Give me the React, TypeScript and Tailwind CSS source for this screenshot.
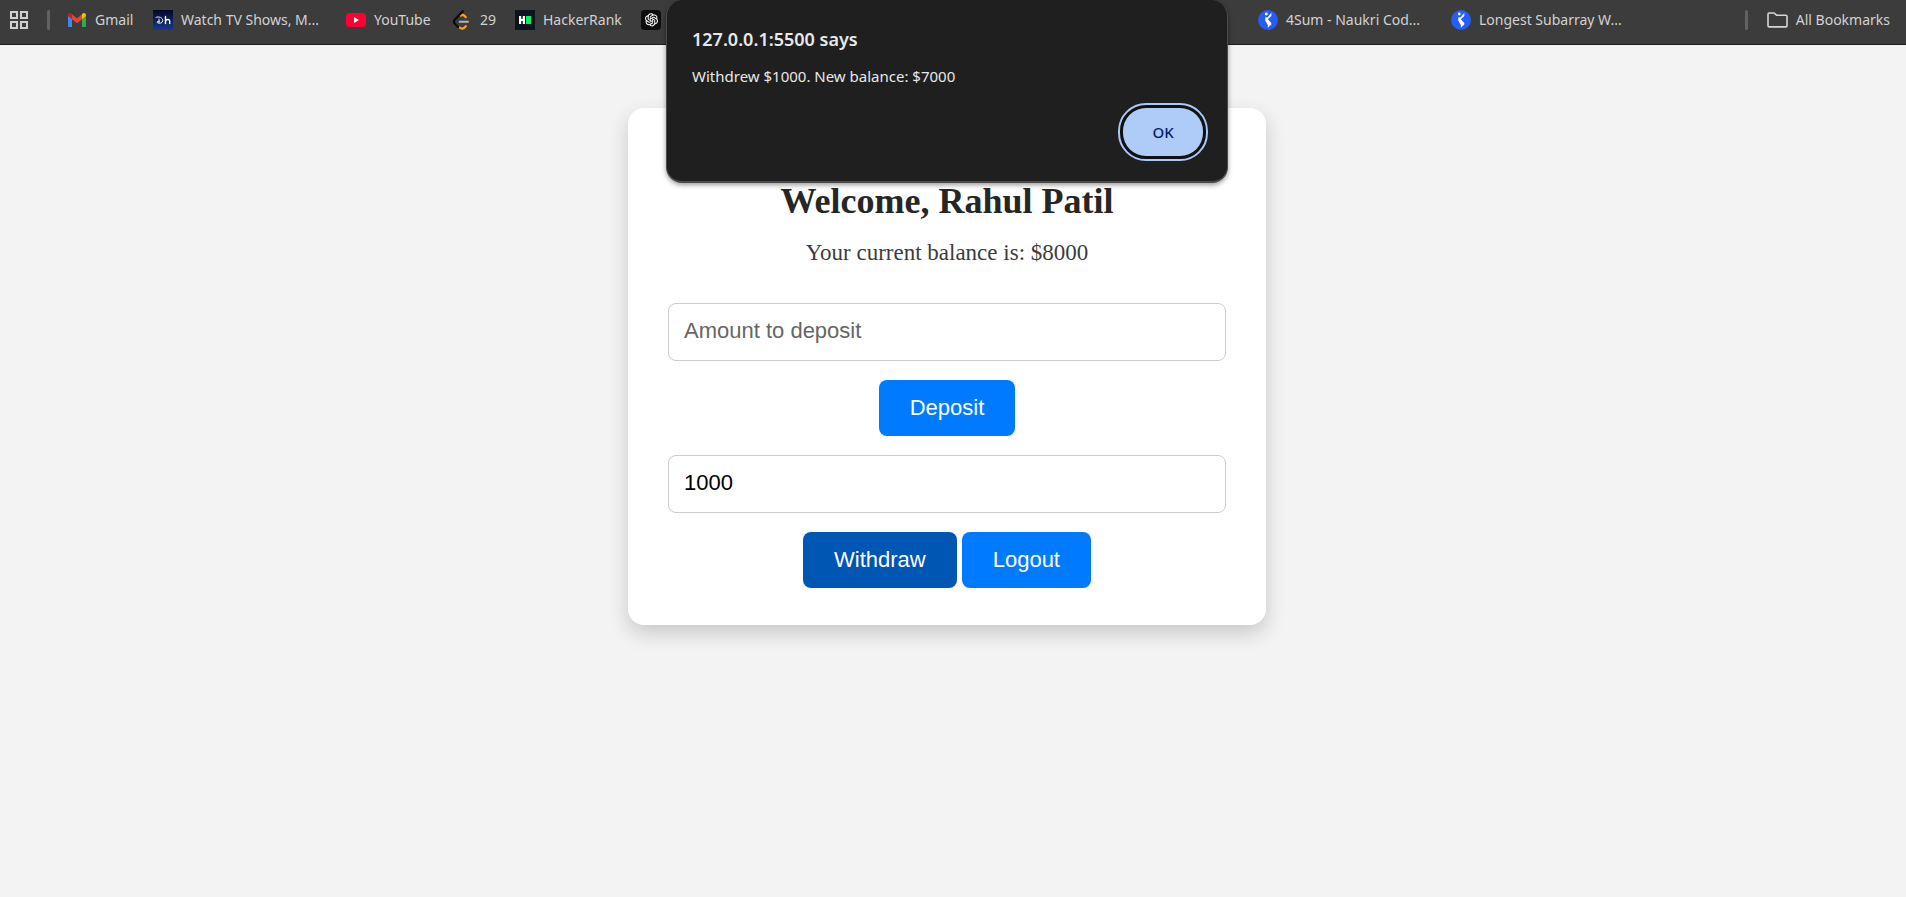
import { useState, type ReactNode } from "react";
import { AiOutlineOpenAI } from "react-icons/ai";

function GmailIcon() {
  return (
    <svg viewBox="0 0 18 14" className="mx-px h-[14px] w-[18px] shrink-0" aria-hidden="true">
      <path fill="#4285f4" d="M0 2.5v10.2C0 13.4.6 14 1.3 14H4V6z" />
      <path fill="#34a853" d="M18 2.5v10.2c0 .7-.6 1.3-1.3 1.3H14V6z" />
      <path fill="#ea4335" d="M4 1.3 9 5.4l5-4.1v4.9l-5 4.1-5-4.1z" />
      <path fill="#c5221f" d="M0 2.2C0 .5 2-.6 3.400.6L4 1.200V6.200L0 3z" />
      <path fill="#fbbc04" d="M18 2.200C18 .5 16-.6 14.600.6L14 1.200V6.200L18 3z" />
    </svg>
  );
}

function HotstarIcon() {
  return (
    <svg viewBox="0 0 20 20" className="size-5 shrink-0" aria-hidden="true">
      <defs>
        <linearGradient id="hotstar" x1="0" y1="0" x2="0" y2="1">
          <stop offset="0" stopColor="#030727" />
          <stop offset="1" stopColor="#153a8c" />
        </linearGradient>
      </defs>
      <path fill="url(#hotstar)" d="M0 0h20v20H0z" />
      <g fill="none" stroke="#fff" strokeLinecap="round">
        <path strokeWidth=".9" d="M3 7.300c3-1 6.700.2 6.700 3.300 0 2.400-2.700 3.200-4.900 2.300-1.600-.7-.7-1.900 1.800-1.700M6 9v3.500" />
        <path strokeWidth="1.400" d="M12.500 6.500v7M12.700 10.700c.8-1.700 4-1.700 4 .5v2.300" />
      </g>
    </svg>
  );
}

function YouTubeIcon() {
  return (
    <svg viewBox="0 0 20 14" className="h-[14px] w-5 shrink-0" aria-hidden="true">
      <rect width="20" height="14" rx="3.500" fill="#ff0033" />
      <path fill="#fff" d="m8 4 5 3-5 3z" />
    </svg>
  );
}

function LeetCodeIcon() {
  return (
    <svg viewBox="0 0 20 20" className="size-5 shrink-0" aria-hidden="true">
      <g fill="none" strokeLinecap="round" strokeWidth="2.200">
        <path stroke="#ffa116" d="M9 5.500c1.300-.9 2.500-.6 3.500.4l1.300 1.300M7.500 17.500c1.600 1.400 3.600 1.300 4.900.1l1.400-1.400" />
        <path stroke="#0b0b0b" d="M10.800 1.300 3.200 9.200c-1.600 1.600-1.600 3.300-.1 4.800l3 3" />
        <path stroke="#b3b3b3" strokeWidth="2" d="M7.700 11.700h8.300" />
      </g>
    </svg>
  );
}

function HackerRankIcon() {
  return (
    <svg viewBox="0 0 20 20" className="size-5 shrink-0" aria-hidden="true">
      <path fill="#0e141e" d="M0 0h20v20H0z" />
      <path fill="#fff" d="M4 6h2.200v2.800h1.600V6H10v8H7.800v-3H6.200v3H4z" />
      <path fill="#05f065" d="M11 6h5v8h-5z" />
    </svg>
  );
}

function ChatIcon() {
  return (
    <span className="flex size-5 shrink-0 items-center justify-center rounded bg-[#0d0d0d] text-white">
      <AiOutlineOpenAI className="size-[17px]" />
    </span>
  );
}

function CodeStudioIcon() {
  return (
    <svg viewBox="0 0 20 20" className="size-5 shrink-0" aria-hidden="true">
      <circle cx="10" cy="10" r="10" fill="#275df5" />
      <circle cx="8.300" cy="4" r="1.400" fill="#fff" />
      <path fill="#fff" d="M13.300 2.800v3.300L9.800 9.300l3.500 3.700v1.600l-3.500 3.100V15L7.300 10.800V7.300l2.200.2z" />
    </svg>
  );
}

function FolderIcon() {
  return (
    <svg viewBox="0 0 21 16" className="h-4 w-[21px] shrink-0" fill="none" stroke="#d6d6d6" strokeWidth="1.600" strokeLinejoin="round" aria-hidden="true">
      <path d="M1 13.700V2.200C1 1.500 1.500 1 2.200 1h4.900l2.400 2.200h9.300c.7 0 1.200.5 1.200 1.200v9.300c0 .7-.5 1.200-1.200 1.200H2.200c-.7 0-1.200-.5-1.200-1.200z" />
    </svg>
  );
}

function AppsIcon() {
  return (
    <svg viewBox="0 0 18 18" className="size-[18px]" fill="none" stroke="#d0d0d0" strokeWidth="2" aria-hidden="true">
      <path d="M1 1h6v6H1zM11 1h6v6h-6zM1 11h6v6H1zM11 11h6v6h-6z" />
    </svg>
  );
}

function Bookmark({ icon, label, title, className }: { icon: ReactNode; label?: string; title?: string; className?: string }) {
  return (
    <a href="#" aria-label={title} className={`flex shrink-0 items-center gap-2 whitespace-nowrap ${className ?? ""}`}>
      {icon}
      {label}
    </a>
  );
}

function BookmarksBar() {
  return (
    <nav
      aria-label="Bookmarks"
      className="flex h-[45px] items-center overflow-hidden border-b border-[#1c1c1c] bg-[#3c3c3c] pr-4 pb-[5px] pl-[10px] font-['Noto_Sans','Open_Sans',sans-serif] text-sm text-[#d2d2d2]"
    >
      <div className="flex w-[1248px] shrink-0 items-center">
        <button type="button" aria-label="Apps">
          <AppsIcon />
        </button>
        <span className="mr-[17px] ml-[19px] h-5 w-[3px] rounded-full bg-[#626262]" />
        <Bookmark className="w-[86px]" icon={<GmailIcon />} label="Gmail" />
        <Bookmark className="w-[193px]" icon={<HotstarIcon />} label="Watch TV Shows, M..." />
        <Bookmark className="w-[106px]" icon={<YouTubeIcon />} label="YouTube" />
        <Bookmark className="w-[63px]" icon={<LeetCodeIcon />} label="29" />
        <Bookmark className="w-[126px]" icon={<HackerRankIcon />} label="HackerRank" />
        <Bookmark icon={<ChatIcon />} title="ChatGPT" />
      </div>
      <Bookmark className="w-[193px]" icon={<CodeStudioIcon />} label="4Sum - Naukri Cod..." />
      <Bookmark icon={<CodeStudioIcon />} label="Longest Subarray W..." />
      <span className="mr-[19px] ml-auto h-5 w-[3px] shrink-0 rounded-full bg-[#626262]" />
      <Bookmark icon={<FolderIcon />} label="All Bookmarks" />
    </nav>
  );
}

function AlertDialog() {
  return (
    <div className="absolute inset-x-0 top-0 flex justify-center pr-3">
      <div
        role="alertdialog"
        aria-labelledby="alert-title"
        aria-describedby="alert-message"
        className="w-full max-w-[562px] rounded-2xl border border-t-0 border-b-2 border-[#4a4a4a] bg-[#1f1f1f] px-[25px] pt-[26px] pb-5 font-['Noto_Sans','Open_Sans',sans-serif] text-[#e8e8e8] shadow-[0_2px_5px_rgba(0,0,0,0.4)]"
      >
        <h1 id="alert-title" className="text-lg leading-[26px] font-semibold">
          127.0.0.1:5500 says
        </h1>
        <p id="alert-message" className="mt-3 text-[15px] leading-6">
          Withdrew $1000. New balance: $7000
        </p>
        <div className="-mr-[6px] mt-[15px] flex justify-end">
          <button
            type="button"
            className="h-[58px] w-[90px] rounded-[28px] border-2 border-[#a8c7fa] bg-[#101010] p-[3px]"
          >
            <span className="flex h-full items-center justify-center rounded-[23px] bg-[#afcbf8] text-[15px] font-medium text-[#041e6b]">
              OK
            </span>
          </button>
        </div>
      </div>
    </div>
  );
}

const inputClass =
  "block h-[58px] w-full rounded-lg border border-[#cccccc] bg-white px-[15px] pb-[2px] text-[22px] text-black outline-none placeholder:text-[#666666]";
const buttonClass = "h-[56px] rounded-lg px-[31px] pb-[2px] text-[22px] text-white";

export default function App() {
  const [deposit, setDeposit] = useState("");
  const [withdraw, setWithdraw] = useState("1000");

  return (
    <div className="relative min-h-screen bg-[#f3f3f3]">
      <BookmarksBar />
      <main className="flex justify-center pt-[63px] pr-3 font-['Liberation_Sans',Arial,sans-serif]">
        <section className="w-full max-w-[638px] rounded-2xl bg-white px-10 pt-[73px] pb-[37px] text-center shadow-[0_8px_20px_rgba(0,0,0,0.18)]">
          <h2 className="font-[Georgia,'Liberation_Serif',serif] text-4xl leading-10 font-bold text-[#262626]">
            Welcome, Rahul Patil
          </h2>
          <p className="mt-[18px] font-[Georgia,'Liberation_Serif',serif] text-[23px] leading-7 text-[#3c3c3c]">
            Your current balance is: $8000
          </p>
          <div className="mt-9 flex flex-col items-center gap-[19px]">
            <input
              type="text"
              aria-label="Amount to deposit"
              placeholder="Amount to deposit"
              value={deposit}
              onChange={(e) => setDeposit(e.target.value)}
              className={inputClass}
            />
            <button type="button" className={`${buttonClass} bg-[#007bff]`}>
              Deposit
            </button>
            <input
              type="text"
              aria-label="Amount to withdraw"
              value={withdraw}
              onChange={(e) => setWithdraw(e.target.value)}
              className={inputClass}
            />
            <div className="flex gap-[5px]">
              <button type="button" className={`${buttonClass} bg-[#0056b3]`}>
                Withdraw
              </button>
              <button type="button" className={`${buttonClass} bg-[#007bff]`}>
                Logout
              </button>
            </div>
          </div>
        </section>
      </main>
      <AlertDialog />
    </div>
  );
}
